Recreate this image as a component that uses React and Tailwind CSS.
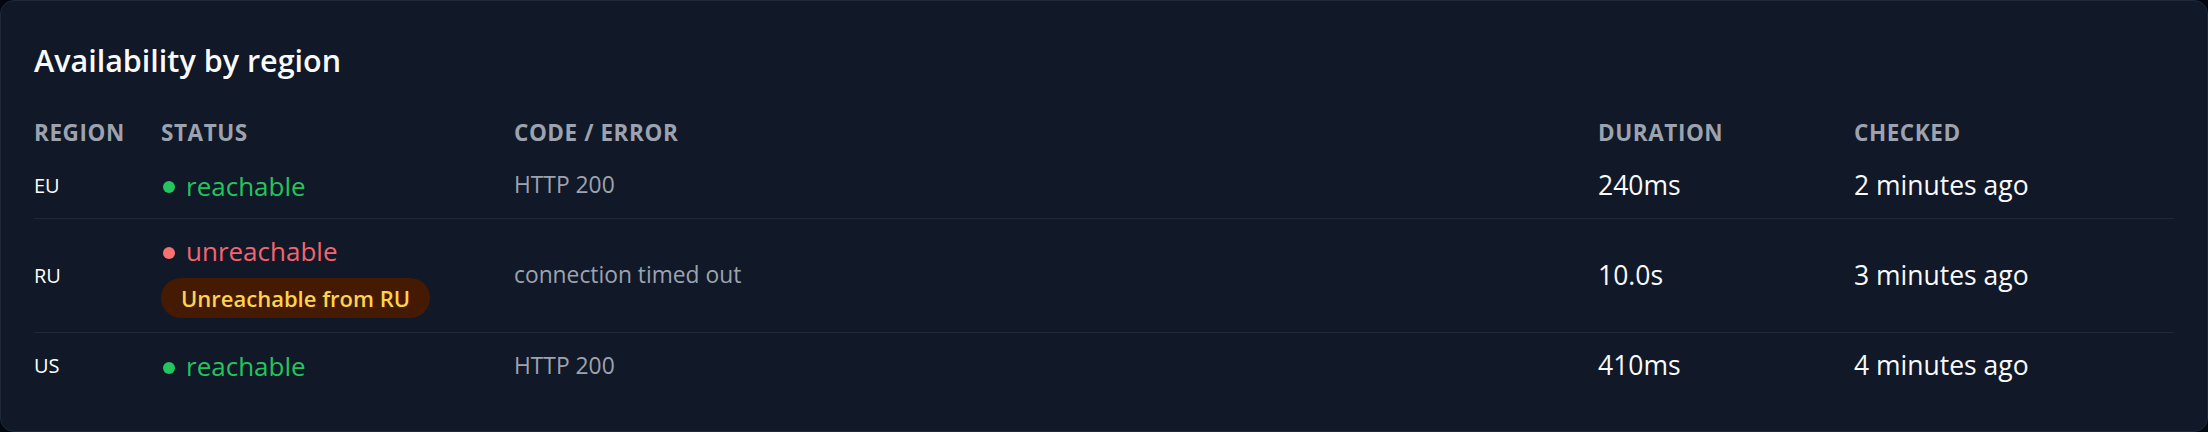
import React from "react";

const rows = [
  { region: "EU", ok: true, status: "reachable", code: "HTTP 200", duration: "240ms", checked: "2 minutes ago" },
  { region: "RU", ok: false, status: "unreachable", code: "connection timed out", duration: "10.0s", checked: "3 minutes ago", badge: "Unreachable from RU" },
  { region: "US", ok: true, status: "reachable", code: "HTTP 200", duration: "410ms", checked: "4 minutes ago" },
];

const cols = "grid grid-cols-[127px_353px_1084px_256px_1fr]";

export default function App() {
  return (
    <div className="w-[2208px] h-[432px] bg-[#030712]" style={{ fontFamily: '"Open Sans", "Noto Sans", sans-serif' }}>
      <div className="h-[432px] rounded-[14px] border border-[#1f2937] bg-[#111827] px-[33px] pt-[37px]">
        <h2 className="text-[30.5px] leading-[44px] font-semibold text-[#f9fafb]">Availability by region</h2>
        <div className="mt-[30px]">
          <div className={`${cols} h-[41px] items-center text-[22.5px] font-bold uppercase tracking-wide text-[#9ca3af]`}>
            <div>Region</div>
            <div>Status</div>
            <div>Code / Error</div>
            <div>Duration</div>
            <div>Checked</div>
          </div>
          {rows.map((r, i) => (
            <div
              key={r.region}
              className={`${cols} items-center ${r.badge ? "h-[114px]" : "h-[66px]"} ${i < rows.length - 1 ? "border-b border-[#1f2937]" : ""}`}
            >
              <div className="text-[20px] font-medium text-white">{r.region}</div>
              <div className="flex flex-col items-start gap-[9px]">
                <div className={`flex items-center gap-[11px] text-[26px] leading-[36px] ${r.ok ? "text-[#22c55e]" : "text-[#f16570]"}`}>
                  <span className={`ml-[2px] mt-[3px] h-[12px] w-[12px] rounded-full ${r.ok ? "bg-[#22c55e]" : "bg-[#f87171]"}`} />
                  <span>{r.status}</span>
                </div>
                {r.badge && (
                  <span className="flex h-[40px] items-center rounded-full bg-[#451a03] px-[20px] text-[22px] font-semibold text-[#fcd34d]">
                    {r.badge}
                  </span>
                )}
              </div>
              <div className="text-[22.8px] text-[#9ca3af]">{r.code}</div>
              <div className="text-[26.5px] text-[#f9fafb]">{r.duration}</div>
              <div className="text-[26.5px] text-[#f9fafb]">{r.checked}</div>
            </div>
          ))}
        </div>
      </div>
    </div>
  );
}
